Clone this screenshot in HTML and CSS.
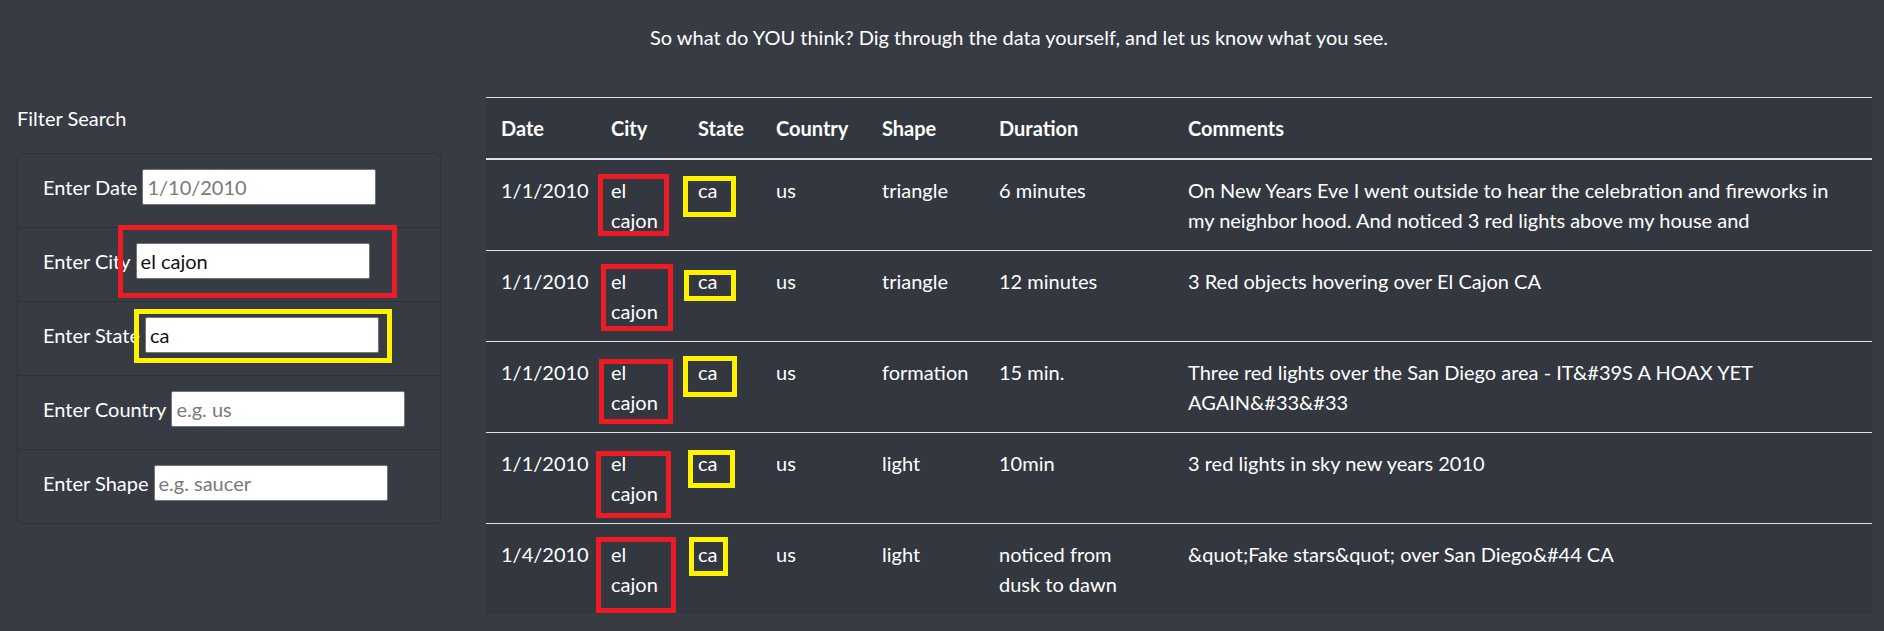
FILE: index.html
```html
<!DOCTYPE html>
<html lang="en">
<head>
<meta charset="utf-8">
<title>UFO Sightings</title>
<link rel="stylesheet" href="styles.css">
</head>
<body>
<header class="intro">
  <p>So what do YOU think? Dig through the data yourself, and let us know what you see.</p>
</header>
<main class="layout">
  <aside class="filters">
    <h2 class="filters-title">Filter Search</h2>
    <form class="filter-list">
      <div class="filter-item">
        <label for="date">Enter Date</label>
        <input id="date" type="text" placeholder="1/10/2010">
      </div>
      <div class="filter-item">
        <label for="city">Enter City</label>
        <input id="city" type="text" value="el cajon">
        <span class="annot annot-red annot-city"></span>
      </div>
      <div class="filter-item">
        <label for="state">Enter State</label>
        <input id="state" type="text" value="ca">
        <span class="annot annot-yellow annot-state"></span>
      </div>
      <div class="filter-item">
        <label for="country">Enter Country</label>
        <input id="country" type="text" placeholder="e.g. us">
      </div>
      <div class="filter-item">
        <label for="shape">Enter Shape</label>
        <input id="shape" type="text" placeholder="e.g. saucer">
      </div>
    </form>
  </aside>
  <section class="results">
    <table class="ufo-table">
      <colgroup>
        <col class="c-date"><col class="c-city"><col class="c-state"><col class="c-country"><col class="c-shape"><col class="c-duration"><col class="c-comments">
      </colgroup>
      <thead>
        <tr><th>Date</th><th>City</th><th>State</th><th>Country</th><th>Shape</th><th>Duration</th><th>Comments</th></tr>
      </thead>
      <tbody>
        <tr class="r1">
          <td>1/1/2010</td>
          <td><div class="cell">el cajon<span class="annot annot-red"></span></div></td>
          <td><div class="cell">ca<span class="annot annot-yellow"></span></div></td>
          <td>us</td><td>triangle</td><td class="duration">6 minutes</td>
          <td>On New Years Eve I went outside to hear the celebration and fireworks in my neighbor hood. And noticed 3 red lights above my house and</td>
        </tr>
        <tr class="r2">
          <td>1/1/2010</td>
          <td><div class="cell">el cajon<span class="annot annot-red"></span></div></td>
          <td><div class="cell">ca<span class="annot annot-yellow"></span></div></td>
          <td>us</td><td>triangle</td><td class="duration">12 minutes</td>
          <td>3 Red objects hovering over El Cajon CA</td>
        </tr>
        <tr class="r3">
          <td>1/1/2010</td>
          <td><div class="cell">el cajon<span class="annot annot-red"></span></div></td>
          <td><div class="cell">ca<span class="annot annot-yellow"></span></div></td>
          <td>us</td><td>formation</td><td class="duration">15 min.</td>
          <td>Three red lights over the San Diego area - IT&amp;#39S A HOAX YET AGAIN&amp;#33&amp;#33</td>
        </tr>
        <tr class="r4">
          <td>1/1/2010</td>
          <td><div class="cell">el cajon<span class="annot annot-red"></span></div></td>
          <td><div class="cell">ca<span class="annot annot-yellow"></span></div></td>
          <td>us</td><td>light</td><td class="duration">10min</td>
          <td>3 red lights in sky new years 2010</td>
        </tr>
        <tr class="r5">
          <td>1/4/2010</td>
          <td><div class="cell">el cajon<span class="annot annot-red"></span></div></td>
          <td><div class="cell">ca<span class="annot annot-yellow"></span></div></td>
          <td>us</td><td>light</td><td class="duration">noticed from dusk to dawn</td>
          <td>&amp;quot;Fake stars&amp;quot; over San Diego&amp;#44 CA</td>
        </tr>
      </tbody>
    </table>
  </section>
</main>
</body>
</html>
```
FILE: styles.css
```css
* { box-sizing: border-box; }

html, body {
  margin: 0;
  height: 100%;
}

body {
  background: #373b44;
  color: #ffffff;
  font-family: "Lato", "Liberation Sans", sans-serif;
  font-size: 20px;
  line-height: 30px;
  overflow: hidden;
}

.intro {
  padding: 22px 0 0 650px;
}

.intro p {
  margin: 0;
}

.layout {
  display: grid;
  grid-template-columns: 471px 1fr;
  margin-top: 45px;
}

.filters {
  padding: 0 30px 0 17px;
}

.filters-title {
  margin: 6px 0 20px;
  font-size: 20px;
  font-weight: 400;
  line-height: 30px;
}

.filter-list {
  margin: 0;
  border: 1px solid rgba(0, 0, 0, 0.16);
  border-radius: 5px;
}

.filter-item {
  position: relative;
  display: flex;
  align-items: baseline;
  height: 73px;
  padding: 15px 0 0 25px;
}

.filter-item + .filter-item {
  height: 74px;
  border-top: 1px solid rgba(0, 0, 0, 0.16);
}

.filter-item label {
  margin-right: 5px;
  white-space: nowrap;
}

.filter-item input {
  width: 234px;
  height: 36px;
  margin: 0;
  padding: 0 4px;
  border: 1px solid #767676;
  border-radius: 2px;
  background: #ffffff;
  color: #111111;
  font-family: "Lato", "Liberation Sans", sans-serif;
  font-size: 20px;
}

.filter-item input::placeholder {
  color: #7a7a7a;
}

.annot {
  position: absolute;
  border: 5px solid;
  pointer-events: none;
}

.annot-red { border-color: #ed1c24; }
.annot-yellow { border-color: #fff200; }

.annot-city {
  left: 100px;
  top: -3px;
  width: 279px;
  height: 73px;
}

.annot-state {
  left: 116px;
  top: 7px;
  width: 258px;
  height: 54px;
}

.results {
  padding: 0 12px 0 15px;
}

.ufo-table {
  width: 100%;
  table-layout: fixed;
  border-collapse: collapse;
  background: #33373f;
}

.c-date { width: 110px; }
.c-city { width: 87px; }
.c-state { width: 78px; }
.c-country { width: 106px; }
.c-shape { width: 117px; }
.c-duration { width: 189px; }

.ufo-table th,
.ufo-table td {
  padding: 15px;
  text-align: left;
  vertical-align: top;
  border-top: 1px solid #dee2e6;
}

.ufo-table th {
  font-weight: 700;
  border-bottom: 2px solid #dee2e6;
}

.ufo-table td.duration {
  padding-right: 40px;
}

.cell {
  position: relative;
}

.r1 .annot-red { left: -13px; top: -1px; width: 71px; height: 62px; }
.r2 .annot-red { left: -10px; top: -2px; width: 72px; height: 67px; }
.r3 .annot-red { left: -12px; top: 2px; width: 74px; height: 65px; }
.r4 .annot-red { left: -15px; top: 3px; width: 75px; height: 67px; }
.r5 .annot-red { left: -15px; top: -2px; width: 80px; height: 76px; }

.r1 .annot-yellow { left: -15px; top: 1px; width: 53px; height: 41px; }
.r2 .annot-yellow { left: -14px; top: 4px; width: 52px; height: 31px; }
.r3 .annot-yellow { left: -15px; top: -1px; width: 54px; height: 41px; }
.r4 .annot-yellow { left: -10px; top: 2px; width: 47px; height: 38px; }
.r5 .annot-yellow { left: -9px; top: -2px; width: 39px; height: 39px; }
```
